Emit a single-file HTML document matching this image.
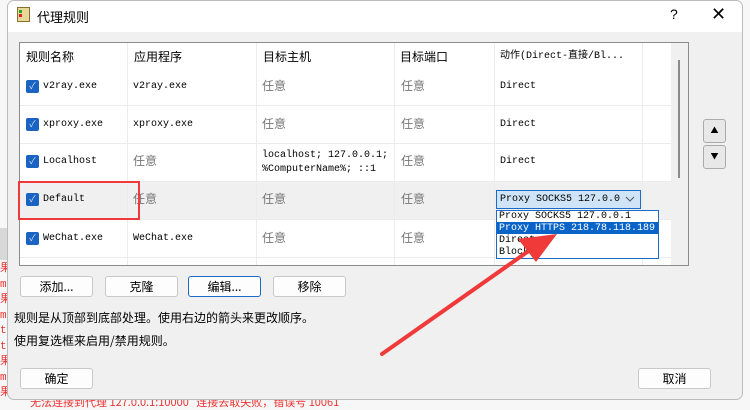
<!DOCTYPE html>
<html><head><meta charset="utf-8"><style>
*{margin:0;padding:0;box-sizing:border-box}
body{width:750px;height:407px;overflow:hidden;background:#f7f7f7;position:relative;font-family:"Liberation Sans","Noto Sans CJK SC",sans-serif;font-size:12px;color:#000}
.a{position:absolute}
.mono{font-family:"Liberation Mono","Noto Sans CJK SC",monospace;font-size:10px;line-height:12px}
.cjk{font-family:"Noto Sans CJK SC","WenQuanYi Zen Hei",sans-serif;font-size:12px}
.gray{color:#777}
.btn{position:absolute;height:21px;border:1px solid #c8c8c8;border-radius:3px;background:#fdfdfd;text-align:center;line-height:19px;font-family:"Noto Sans CJK SC",sans-serif;font-size:12px}
.cb{position:absolute;width:13px;height:13px;background:#1a63c2;border-radius:2px;color:#cfe0f5;font-size:9px;line-height:13px;text-align:center}
.vl{position:absolute;width:1px;background:#ececec}
.hl{position:absolute;height:1px;background:#ececec;left:20px;width:651px}
.red{color:#e33;font-family:"Liberation Mono",monospace;font-size:11px}
</style></head><body>
<div class="a" style="left:0;top:228px;width:8px;height:32px;background:#d8d8d8"></div>
<div class="a red" style="left:0;top:262px;line-height:15.5px;width:8px;overflow:hidden">果:<br>m:<br>果:<br>m:<br>ts<br>ts<br>果:<br>m:<br>果:</div>
<div class="a" style="left:30px;top:394px;color:#e33;font-size:11px;font-family:'Noto Sans CJK SC',sans-serif">无法连接到代理 127.0.0.1:10000 &nbsp;&nbsp;连接去取失败，错误号 10061</div>
<div class="a" style="left:7px;top:0;width:736px;height:400px;background:#f0f0f0;border:1px solid #bbb;border-radius:7px;overflow:hidden">
 <div class="a" style="left:0;top:0;width:736px;height:31px;background:#fff"></div>
</div>
<div class="a" style="left:17px;top:7px;width:13px;height:15px;background:#e9d79a;border:1px solid #8a7030"></div>
<div class="a" style="left:19px;top:10px;width:3px;height:3px;background:#2a2"></div>
<div class="a" style="left:19px;top:14px;width:3px;height:3px;background:#d22"></div>
<div class="a cjk" style="left:37px;top:7px;font-size:13px">代理规则</div>
<div class="a" style="left:670px;top:6px;font-size:14px">?</div>
<div class="a" style="left:711px;top:4px;font-size:18px;font-weight:300">✕</div>
<div class="a" style="left:19px;top:42px;width:670px;height:224px;background:#fff;border:1px solid #8c8c8c"></div>
<div class="a" style="left:20px;top:181px;width:651px;height:38px;background:#f0f0f0"></div>
<div class="a" style="left:671px;top:43px;width:17px;height:222px;background:#f0f0f0"></div>
<div class="a" style="left:678px;top:60px;width:2px;height:118px;background:#8a8a8a"></div>
<div class="vl" style="left:127px;top:43px;height:222px"></div>
<div class="vl" style="left:256px;top:43px;height:222px"></div>
<div class="vl" style="left:394px;top:43px;height:222px"></div>
<div class="vl" style="left:494px;top:43px;height:222px"></div>
<div class="vl" style="left:642px;top:43px;height:222px"></div>
<div class="hl" style="top:105px"></div><div class="hl" style="top:143px"></div><div class="hl" style="top:181px"></div><div class="hl" style="top:219px"></div><div class="hl" style="top:257px"></div>
<div class="a cjk" style="left:26px;top:48px">规则名称</div>
<div class="a cjk" style="left:134px;top:48px">应用程序</div>
<div class="a cjk" style="left:263px;top:48px">目标主机</div>
<div class="a cjk" style="left:400px;top:48px">目标端口</div>
<div class="a mono" style="left:500px;top:51px">动作(Direct-直接/Bl...</div>
<div class="cb" style="left:26px;top:80px">✓</div><div class="a mono" style="left:43px;top:81px">v2ray.exe</div><div class="a mono" style="left:133px;top:81px">v2ray.exe</div><div class="a cjk gray" style="left:262px;top:77px">任意</div><div class="a cjk gray" style="left:401px;top:77px">任意</div><div class="a mono" style="left:500px;top:81px">Direct</div>
<div class="cb" style="left:26px;top:118px">✓</div><div class="a mono" style="left:43px;top:119px">xproxy.exe</div><div class="a mono" style="left:133px;top:119px">xproxy.exe</div><div class="a cjk gray" style="left:262px;top:115px">任意</div><div class="a cjk gray" style="left:401px;top:115px">任意</div><div class="a mono" style="left:500px;top:119px">Direct</div>
<div class="cb" style="left:26px;top:155px">✓</div><div class="a mono" style="left:43px;top:156px">Localhost</div><div class="a cjk gray" style="left:133px;top:152px">任意</div><div class="a mono" style="left:262px;top:149px;line-height:14px">localhost; 127.0.0.1;<br>%ComputerName%; ::1</div><div class="a cjk gray" style="left:401px;top:152px">任意</div><div class="a mono" style="left:500px;top:156px">Direct</div>
<div class="cb" style="left:26px;top:193px">✓</div><div class="a mono" style="left:43px;top:194px">Default</div><div class="a cjk gray" style="left:133px;top:190px">任意</div><div class="a cjk gray" style="left:262px;top:190px">任意</div><div class="a cjk gray" style="left:401px;top:190px">任意</div>
<div class="cb" style="left:26px;top:232px">✓</div><div class="a mono" style="left:43px;top:233px">WeChat.exe</div><div class="a mono" style="left:133px;top:233px">WeChat.exe</div><div class="a cjk gray" style="left:262px;top:229px">任意</div><div class="a cjk gray" style="left:401px;top:229px">任意</div>
<div class="a" style="left:18px;top:181px;width:122px;height:39px;border:2px solid #f03a3a"></div>
<div class="a" style="left:496px;top:190px;width:145px;height:19px;background:#cfe4f7;border:1px solid #1a6ac8"></div>
<div class="a mono" style="left:500px;top:194px">Proxy SOCKS5 127.0.0</div>
<svg class="a" style="left:625px;top:196px" width="10" height="6"><polyline points="1,1 5,5 9,1" fill="none" stroke="#555" stroke-width="1"/></svg>
<div class="a" style="left:496px;top:210px;width:163px;height:49px;background:#fff;border:1px solid #1a6ac8"></div>
<div class="a" style="left:497px;top:222px;width:161px;height:12px;background:#0a64c8"></div>
<div class="a mono" style="left:499px;top:211px;line-height:12px">Proxy SOCKS5 127.0.0.1<br><span style="color:#fff">Proxy HTTPS 218.78.118.189</span><br>Direct<br>Block</div>
<svg class="a" style="left:0;top:0" width="750" height="407"><line x1="382" y1="354" x2="530" y2="250" stroke="#f03a3a" stroke-width="4" stroke-linecap="round"/><polygon points="557,234 518,239 536,262" fill="#f03a3a"/></svg>
<div class="btn" style="left:703px;top:119px;width:23px;height:24px;background:#e8e8e8;border-color:#aaa;line-height:22px;font-size:8px">▲</div>
<div class="btn" style="left:703px;top:145px;width:23px;height:24px;background:#e8e8e8;border-color:#aaa;line-height:22px;font-size:8px">▼</div>
<div class="btn" style="left:20px;top:276px;width:73px">添加...</div>
<div class="btn" style="left:105px;top:276px;width:73px">克隆</div>
<div class="btn" style="left:188px;top:276px;width:73px;border-color:#1a6ac8">编辑...</div>
<div class="btn" style="left:273px;top:276px;width:73px">移除</div>
<div class="a cjk" style="left:14px;top:309px">规则是从顶部到底部处理。使用右边的箭头来更改顺序。</div>
<div class="a cjk" style="left:14px;top:332px">使用复选框来启用/禁用规则。</div>
<div class="btn" style="left:20px;top:368px;width:73px">确定</div>
<div class="btn" style="left:638px;top:368px;width:73px">取消</div>
</body></html>
